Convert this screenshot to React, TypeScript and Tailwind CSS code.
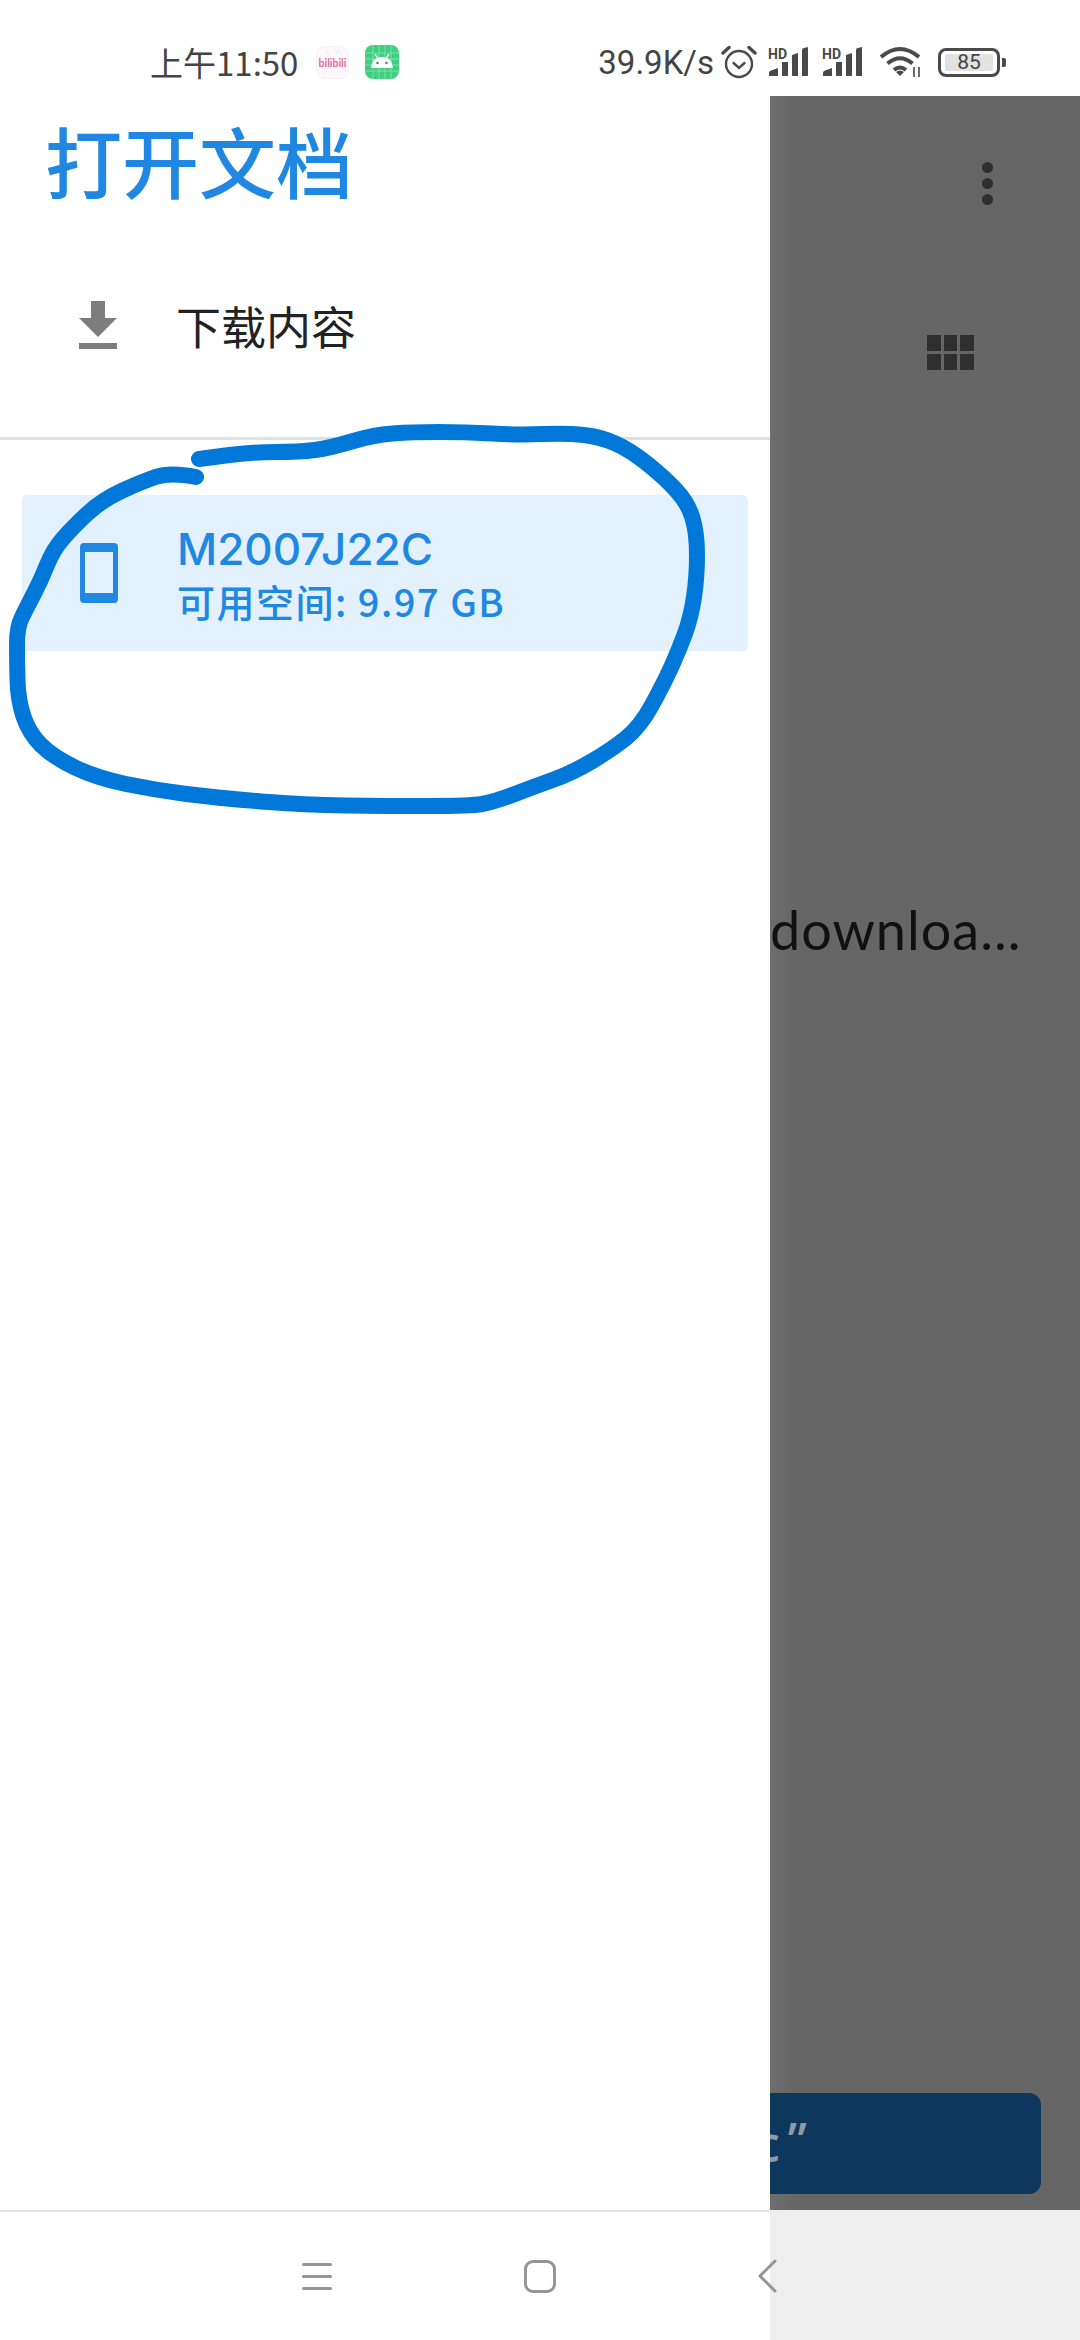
const CJK = 'font-["Noto_Sans_CJK_SC","Noto_Sans",sans-serif]'

// ink scribble circled over the page, sampled along the stroke's centre line
const INK: [number, number][] = [
  [196, 477], [170, 472], [141, 482], [102, 500], [73, 527], [53, 550], [41, 580], [27, 607], [17, 627],
  [17, 660], [18, 700], [29, 733], [53, 757], [97, 778], [155, 790], [218, 798], [305, 805], [388, 806],
  [470, 806], [494, 802], [533, 787], [572, 773], [611, 750], [640, 727], [664, 683], [679, 650], [691, 617],
  [697, 577], [697, 533], [688, 503], [664, 477], [630, 450], [601, 437], [567, 433], [519, 435], [465, 432],
  [412, 432], [373, 435], [330, 448], [300, 452], [252, 452], [199, 459],
]

function inkPath() {
  let d = `M${INK[0][0]} ${INK[0][1]}`
  for (let i = 1; i < INK.length - 1; i++) {
    const [x, y] = INK[i]
    const [nx, ny] = INK[i + 1]
    d += ` Q${x} ${y} ${(x + nx) / 2} ${(y + ny) / 2}`
  }
  const last = INK[INK.length - 1]
  return `${d} L${last[0]} ${last[1]}`
}

function Signal() {
  return (
    <svg width="42" height="30" viewBox="0 0 42 30" className="block overflow-visible">
      <text x="0" y="12" fontSize="14" fontWeight="700" fontFamily="Roboto, sans-serif" fill="#4a4a4a">HD</text>
      <path d="M1 29 V26 Q1 24 3 23.5 L10 21 V29 Z M14 29 V15 H20 V29 Z M24 29 V8 L30 6 V29 Z M34 29 V3 Q34 1 36 1 L40 0 V29 Z" fill="#4a4a4a" />
    </svg>
  )
}

function StatusBar() {
  return (
    <div className="flex h-[96px] shrink-0 items-center justify-between bg-white pt-[28px] pl-[150px] pr-[74px] text-[#444]">
      <div className="flex items-center">
        <span className={`text-[33px] leading-none ${CJK}`}>上午11:50</span>
        <svg width="33" height="33" viewBox="0 0 33 33" className="ml-[18px]">
          <rect x="0.5" y="0.5" width="32" height="32" rx="8" fill="#fcf8fa" stroke="#f4f0f2" />
          <path d="M10 4 L13 8 M23 4 L20 8" stroke="#eee" strokeWidth="2" />
          <text x="16.5" y="21" textAnchor="middle" fontSize="10.5" fontWeight="700" fontFamily="Lato, sans-serif" fill="#e9689a">bilibili</text>
        </svg>
        <svg width="34" height="34" viewBox="0 0 34 34" className="ml-[16px]">
          <rect width="34" height="34" rx="8" fill="#3ecf80" />
          <path d="M0 8H34M0 14H34M0 20H34M0 26H34M8 0V34M14 0V34M20 0V34M26 0V34" stroke="#7fe2ab" strokeWidth="1" />
          <path d="M6 23 Q7 12 17 12 Q27 12 28 23 Z" fill="#fff" />
          <path d="M10 9 L12.5 13 M24 9 L21.5 13" stroke="#fff" strokeWidth="1.4" />
          <circle cx="12.5" cy="18" r="1.3" fill="#2a9a5c" />
          <circle cx="21.5" cy="18" r="1.3" fill="#2a9a5c" />
        </svg>
      </div>
      <div className="flex items-center">
        <span className='text-[33px] leading-none font-["Roboto",sans-serif]'>39.9K/s</span>
        <svg width="36" height="34" viewBox="0 0 36 34" fill="none" stroke="#4a4a4a" strokeWidth="2.4" className="ml-[7px]">
          <circle cx="18" cy="19" r="13" />
          <path d="M12.5 18 L18 23 L23.5 18" strokeLinecap="round" />
          <path d="M2 8 L8 2.5 M34 8 L28 2.5" strokeWidth="3.4" strokeLinecap="round" />
        </svg>
        <div className="ml-[11px]"><Signal /></div>
        <div className="ml-[12px]"><Signal /></div>
        <svg width="44" height="32" viewBox="0 0 44 32" fill="none" stroke="#4a4a4a" className="ml-[15px]">
          <path d="M2 11 Q21 -5 40 11" strokeWidth="4" />
          <path d="M8.5 17.5 Q21 7 33.5 17.5" strokeWidth="4" />
          <path d="M15 24 Q21 19 27 24" strokeWidth="4" />
          <path d="M17 26 L21 30 L25 26 Q21 23 17 26 Z" fill="#4a4a4a" stroke="none" />
          <path d="M35 21 V31 M40 21 V31" strokeWidth="1.6" />
        </svg>
        <div className="ml-[15px] flex items-center">
          <div className='flex h-[29px] w-[62px] items-center justify-center rounded-[8px] border-[3px] border-[#4a4a4a] px-[4px] py-[3px]'>
            <div className='flex h-full w-full items-center justify-center rounded-[2px] bg-[#e2e2e2] text-[21px] leading-none font-["Roboto",sans-serif]'>85</div>
          </div>
          <div className="ml-[2px] h-[9px] w-[4px] rounded-r-[2px] bg-[#4a4a4a]" />
        </div>
      </div>
    </div>
  )
}

function Drawer() {
  return (
    <aside className={`relative z-10 flex w-[770px] shrink-0 flex-col bg-white ${CJK}`}>
      <h1 className="ml-[45px] mt-[18px] text-[77px] leading-[92px] font-medium text-[#2088e2]">打开文档</h1>
      <div className="mt-[64px] flex h-[110px] items-center pl-[79px]">
        <svg width="38" height="48" viewBox="0 0 38 48" fill="#7d7d7d" className="shrink-0">
          <path d="M12 0 H26 V17 H38 L19 36 L0 17 H12 Z" />
          <rect y="42" width="38" height="6" />
        </svg>
        <span className="ml-[59px] text-[45px] leading-none text-[#222]">下载内容</span>
      </div>
      <div className="mt-[57px] h-[3px] bg-[#e0e0e0]" />
      <div className="mx-[22px] mt-[55px] flex h-[156px] items-center rounded-[5px] bg-[#e2f1fd] pl-[58px] text-[#2088e2]">
        <svg width="38" height="60" viewBox="0 0 38 60" className="shrink-0">
          <rect width="38" height="60" rx="4" fill="#2088e2" />
          <rect x="5" y="9" width="28" height="41" fill="#e2f1fd" />
        </svg>
        <div className="ml-[59px] flex flex-col">
          <span className='text-[44px] leading-[56px] font-medium font-["Inter",sans-serif]'>M2007J22C</span>
          <span className="text-[38px] leading-[48px] font-medium tracking-[1.5px]">可用空间: 9.97 GB</span>
        </div>
      </div>
    </aside>
  )
}

function Backdrop() {
  return (
    <main className="flex min-w-0 flex-1 flex-col overflow-hidden bg-[linear-gradient(to_right,#6e6e6e,#666666_24px)]">
      <div className="ml-auto mr-[87px] mt-[66px] flex w-[11px] flex-col gap-[5px]">
        <div className="h-[11px] rounded-full bg-[#2f2f2f]" />
        <div className="h-[11px] rounded-full bg-[#2f2f2f]" />
        <div className="h-[11px] rounded-full bg-[#2f2f2f]" />
      </div>
      <div className="ml-[157px] mt-[130px] grid w-[47px] grid-cols-3 gap-x-[3px] gap-y-[3px]">
        {Array.from({ length: 6 }).map((_, i) => (
          <div key={i} className="h-[16px] bg-[#2f2f2f]" />
        ))}
      </div>
      <div className='mt-[528px] text-[54px] leading-[64px] whitespace-nowrap tracking-[1px] text-[#111] font-["Lato",sans-serif]'>downloa...</div>
      <div className='mr-[39px] mb-[16px] mt-auto flex h-[101px] items-center rounded-r-[12px] bg-[#0d375c] text-[48px] leading-[64px] font-semibold whitespace-nowrap text-[#8f9aa5] font-["Open_Sans",sans-serif]'>
        <span className="-ml-[14px]">c</span>
        <span className="ml-[8px] -mt-[8px]">”</span>
      </div>
    </main>
  )
}

function NavBar() {
  return (
    <div className="flex h-[130px] shrink-0 bg-[#eeeeee]">
      <div className="relative z-10 flex w-[770px] shrink-0 items-center border-t-2 border-[#e6e6e6] bg-white pl-[302px]">
        <div className="flex w-[30px] shrink-0 flex-col gap-[9px]">
          <div className="h-[3px] rounded-full bg-[#959595]" />
          <div className="h-[3px] rounded-full bg-[#959595]" />
          <div className="h-[3px] rounded-full bg-[#959595]" />
        </div>
        <div className="ml-[192px] h-[33px] w-[32px] shrink-0 rounded-[9px] border-[3px] border-[#959595]" />
        <svg width="19" height="34" viewBox="0 0 19 34" fill="none" stroke="#959595" strokeWidth="3" strokeLinecap="round" strokeLinejoin="round" className="ml-[202px] shrink-0 overflow-visible">
          <path d="M17 2 L2 17 L17 32" />
        </svg>
      </div>
    </div>
  )
}

export default function App() {
  return (
    <div className="relative flex h-[2340px] w-[1080px] flex-col overflow-hidden bg-white">
      <StatusBar />
      <div className="flex min-h-0 flex-1">
        <Drawer />
        <Backdrop />
      </div>
      <NavBar />
      {/* hand drawn circle sits on top of everything */}
      <svg width="1080" height="2340" className="pointer-events-none absolute inset-0 z-20" fill="none">
        <path d={inkPath()} stroke="#0078d9" strokeWidth="16" strokeLinecap="round" strokeLinejoin="round" />
      </svg>
    </div>
  )
}
